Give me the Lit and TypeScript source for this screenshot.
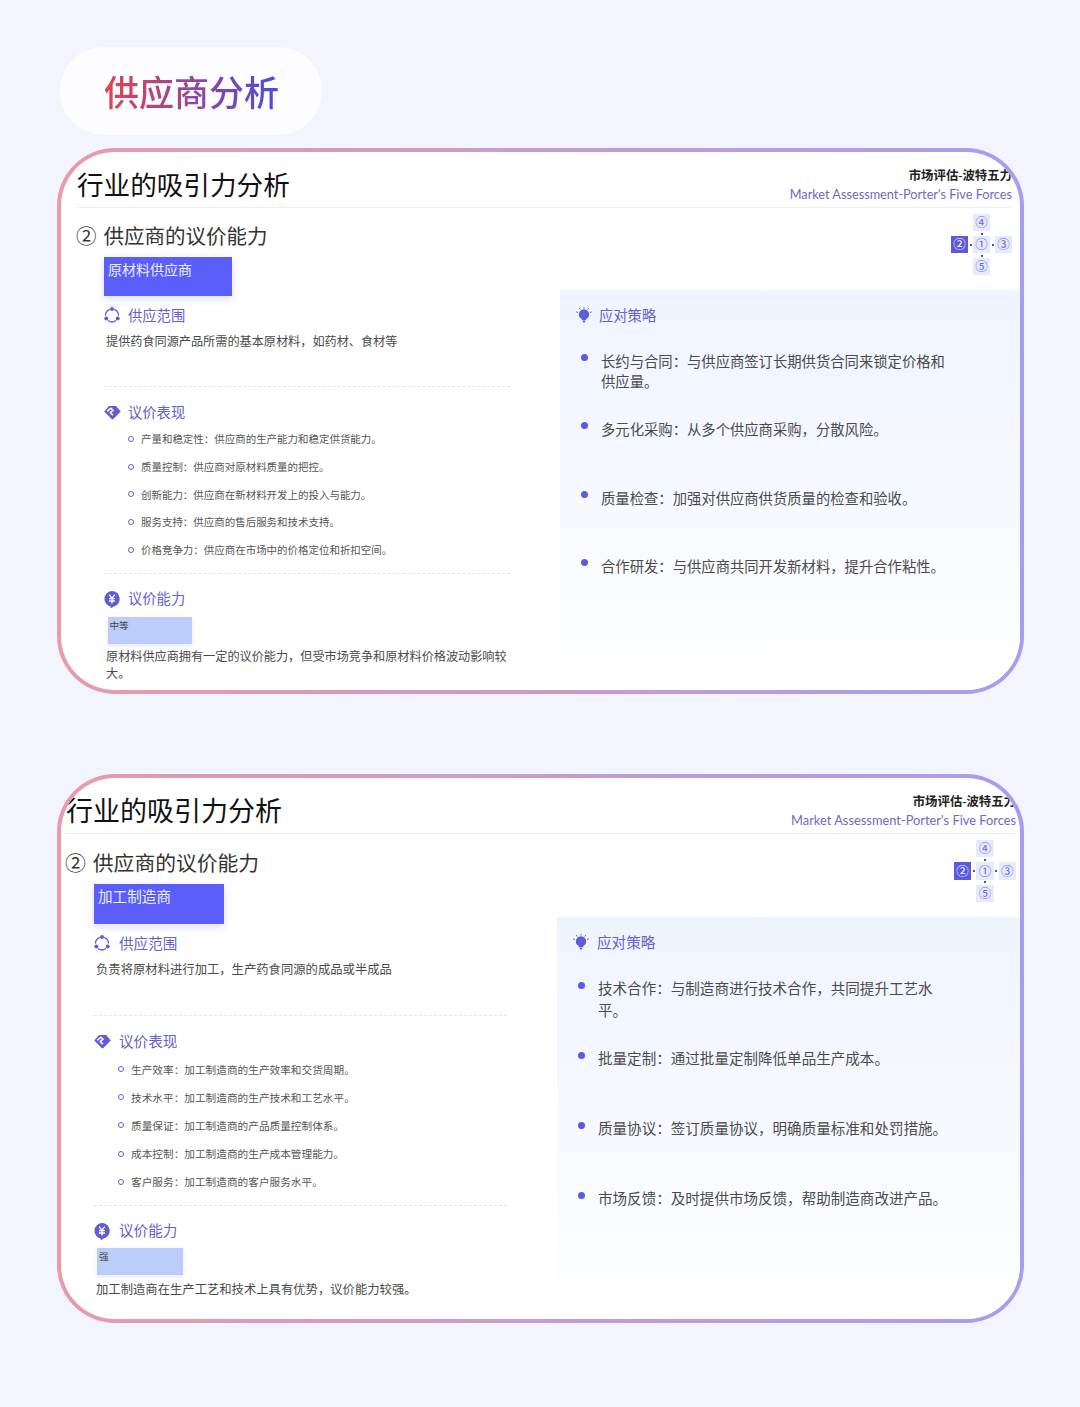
import { LitElement, html, css, svg } from "lit";
import { customElement, property } from "lit/decorators.js";

const ICON_SHARE = svg`<svg class="ic" viewBox="0 0 16 16" fill="none" stroke="#5f5cd6" stroke-width="1.3" stroke-linecap="round">
  <path d="M10.6 2.6A6.5 6.5 0 0 1 14.5 8.2"/><path d="M5.4 2.6A6.5 6.5 0 0 0 1.5 8.2"/><path d="M4.4 13.8A6.5 6.5 0 0 0 11.6 13.8"/>
  <g fill="#5f5cd6" stroke="none"><circle cx="8" cy="2.1" r="2"/><circle cx="2.3" cy="11.6" r="2"/><circle cx="13.7" cy="11.6" r="2"/></g></svg>`;
const ICON_DEAL = svg`<svg class="ic wide" viewBox="0 0 18 16">
  <path d="M5.2 1h7.6L17.8 6.8 9.9 14.8a1.3 1.3 0 0 1-1.8 0L.2 6.8z" fill="#5f5cd6"/>
  <path d="M3.4 6.8 7 3.4l2.6 2.2-3 2.6 2.8 2.6" fill="none" stroke="#fff" stroke-width="1.6" stroke-linejoin="round"/></svg>`;
const ICON_YEN = svg`<svg class="ic" viewBox="0 0 16 16">
  <path d="M8 0a7.9 7.9 0 0 1 1.6 15.6L7.4 17a.5.5 0 0 1-.8-.4v-1A7.9 7.9 0 0 1 8 0z" fill="#5f5cd6"/>
  <path d="M5.2 3.7 8 7.2l2.8-3.5M5 7.6h6M5 10h6M8 7.2v5.2" fill="none" stroke="#fff" stroke-width="1.3"/></svg>`;
const ICON_BULB = svg`<svg class="ic" viewBox="0 0 16 16">
  <circle cx="8" cy="7.4" r="5.2" fill="#5f5cd6"/><path d="M5.8 11.4h4.4v1.8H5.8zM6.6 13.8h2.8l-.6 1.6H7.2z" fill="#5f5cd6"/>
  <path d="M8 .3v.9M3.4 1.4l.6.8M12.6 1.4l-.6.8M.6 5l1 .4M15.4 5l-1 .4" stroke="#5f5cd6" stroke-width="1" stroke-linecap="round"/></svg>`;

interface Slide {
  variant: string;
  supplier: string;
  scope: string;
  rows: string[];
  level: string;
  power: string;
  strategies: string[];
}

const SLIDES: Slide[] = [
  {
    variant: "one",
    supplier: "原材料供应商",
    scope: "提供药食同源产品所需的基本原材料\uFF0C如药材、食材等",
    rows: [
      "产量和稳定性\uFF1A供应商的生产能力和稳定供货能力。",
      "质量控制\uFF1A供应商对原材料质量的把控。",
      "创新能力\uFF1A供应商在新材料开发上的投入与能力。",
      "服务支持\uFF1A供应商的售后服务和技术支持。",
      "价格竞争力\uFF1A供应商在市场中的价格定位和折扣空间。",
    ],
    level: "中等",
    power: "原材料供应商拥有一定的议价能力\uFF0C但受市场竞争和原材料价格波动影响较大。",
    strategies: [
      "长约与合同\uFF1A与供应商签订长期供货合同来锁定价格和供应量。",
      "多元化采购\uFF1A从多个供应商采购\uFF0C分散风险。",
      "质量检查\uFF1A加强对供应商供货质量的检查和验收。",
      "合作研发\uFF1A与供应商共同开发新材料\uFF0C提升合作粘性。",
    ],
  },
  {
    variant: "two",
    supplier: "加工制造商",
    scope: "负责将原材料进行加工\uFF0C生产药食同源的成品或半成品",
    rows: [
      "生产效率\uFF1A加工制造商的生产效率和交货周期。",
      "技术水平\uFF1A加工制造商的生产技术和工艺水平。",
      "质量保证\uFF1A加工制造商的产品质量控制体系。",
      "成本控制\uFF1A加工制造商的生产成本管理能力。",
      "客户服务\uFF1A加工制造商的客户服务水平。",
    ],
    level: "强",
    power: "加工制造商在生产工艺和技术上具有优势\uFF0C议价能力较强。",
    strategies: [
      "技术合作\uFF1A与制造商进行技术合作\uFF0C共同提升工艺水平。",
      "批量定制\uFF1A通过批量定制降低单品生产成本。",
      "质量协议\uFF1A签订质量协议\uFF0C明确质量标准和处罚措施。",
      "市场反馈\uFF1A及时提供市场反馈\uFF0C帮助制造商改进产品。",
    ],
  },
];

@customElement("slide-card")
class SlideCard extends LitElement {
  @property({ attribute: false }) slide!: Slide;

  static styles = css`
    :host { display: block; }
    * { box-sizing: border-box; }
    .card {
      width: 967px;
      border: 4px solid transparent;
      border-radius: 58px;
      background: linear-gradient(#fff, #fff) padding-box,
        linear-gradient(90deg, #e99ba8 0%, #a79df0 100%) border-box;
      overflow: hidden;
      font-family: "Noto Sans CJK SC", sans-serif;
      color: #444;
    }
    .one { height: 546px;
      --pad-l: 16px; --pad-r: 8px; --title: 26.6px; --en: 12.7px; --sub-x: 15px; --sub: 20.5px; --main-x: 43px;
      --left: 499px; --sub-mt: 12px; --badge-w: 128px; --badge-h: 39px; --badge-f: 14px;
      --desc: 12.15px; --sep1: 36px; --row: 27.7px; --row-f: 10.48px; --rows-mt: 2px; --sep2: 9.4px;
      --tag-x: 3.5px; --tag-w: 84px; --tag-mt: 7px; --power-mt: 3.5px; --head-gap: 8px; --head-f: 14.3px;
      --li-f: 14.33px; --li-lh: 20px; --li-h: 68.4px; --li-dot: 3px; --panel-pt: 14px; --list-mt: 25px; --p-head-gap: 7px;
      --nav-mb: 15px; --cell: 17px; }
    .two { height: 549px;
      --pad-l: 5px; --pad-r: 4px; --title: 27px; --en: 12.85px; --sub-x: 4px; --sub: 20.8px; --main-x: 33px;
      --left: 496px; --sub-mt: 13px; --badge-w: 130px; --badge-h: 40px; --badge-f: 14.6px;
      --desc: 12.33px; --sep1: 37px; --row: 28.2px; --row-f: 10.67px; --rows-mt: 3px; --sep2: 9px;
      --tag-x: 3px; --tag-w: 86px; --tag-mt: 6px; --power-mt: 6.5px; --head-gap: 9px; --head-f: 14.6px;
      --li-f: 14.56px; --li-lh: 22px; --li-h: 69.9px; --li-dot: 5px; --panel-pt: 14px; --list-mt: 24px; --p-head-gap: 8px;
      --nav-mb: 15px; --cell: 17.4px; }

    .head {
      height: 56px;
      margin: 0 var(--pad-r) 0 var(--pad-l);
      border-bottom: 1px solid #ececf2;
      display: flex;
      justify-content: space-between;
    }
    .title { font-size: var(--title); line-height: 40px; padding-top: 12px; color: #111; white-space: nowrap; }
    .tr { padding-top: 15px; text-align: right; white-space: nowrap; }
    .cn { font-family: "Liberation Serif", "Noto Sans CJK SC", serif; font-weight: 700; font-size: 12.4px; line-height: 18px; color: #222; }
    .en { font-family: Lato, sans-serif; font-size: var(--en); line-height: 18px; color: #6d6ac8; }

    .body { display: grid; grid-template-columns: var(--left) 1fr; height: calc(100% - 56px); }
    .sub { display: flex; gap: 7px; margin: var(--sub-mt) 0 0 var(--sub-x); font-size: var(--sub); line-height: 30px; color: #333; }
    .main { padding: 7px 50px 0 var(--main-x); }
    .badge {
      width: var(--badge-w); height: var(--badge-h); padding: 2px 4px;
      background: #5b5ef9; color: #eef; font-size: var(--badge-f); line-height: 20px;
      box-shadow: 0 3px 8px rgba(91, 94, 249, 0.22);
    }
    .heading { display: flex; align-items: center; gap: var(--head-gap); height: 22px; font-size: var(--head-f); color: #6461cf; }
    .heading span { padding-bottom: 2px; }
    .ic { width: 16px; height: 16px; flex: none; overflow: visible; }
    .wide { width: 17px; height: 15px; margin-right: -1px; }
    .h1 { margin-top: 8px; }
    .desc { margin: 6px 0 0 2px; font-size: var(--desc); line-height: 18px; color: #4a4a4a; }
    .sep { border-top: 1px dashed #e6e6ea; height: 0; }
    .s1 { margin-top: var(--sep1); }
    .s2 { margin-top: var(--sep2); }
    .h2 { margin-top: 14px; }
    .rows { margin-top: var(--rows-mt); }
    .row { height: var(--row); display: flex; align-items: center; gap: 7px; padding-left: 24px; font-size: var(--row-f); color: #555; white-space: nowrap; }
    .ring { width: 6px; height: 6px; border: 1.2px solid #6461cf; border-radius: 50%; flex: none; }
    .tag {
      margin: var(--tag-mt) 0 0 var(--tag-x); width: var(--tag-w); height: 27px; padding: 0 2px;
      background: #bccdfb; font-size: 9.6px; line-height: 17px; color: #444;
      box-shadow: 0 2px 5px rgba(120, 140, 230, 0.2);
    }
    .power { margin: var(--power-mt) 0 0 2px; font-size: var(--desc); line-height: 17px; color: #4a4a4a; }

    .right { display: flex; flex-direction: column; min-width: 0; }
    .nav {
      align-self: flex-end; margin: 6px var(--pad-r) var(--nav-mb) 0;
      display: grid; grid-template-columns: var(--cell) 5px var(--cell) 5px var(--cell); grid-template-rows: var(--cell) 5px var(--cell) 5px var(--cell);
      place-items: center; font-size: 12.5px; color: #6a68d8; line-height: 1;
    }
    .cell { width: var(--cell); height: var(--cell); background: #e5eafc; display: flex; align-items: center; justify-content: center; }
    .cell.on { background: #5a5ae0; color: #fff; }
    .dot { width: 2px; height: 2px; border-radius: 50%; background: #222; }
    .panel { flex: 1; padding: var(--panel-pt) 0 0 16px; background: linear-gradient(180deg, #f0f4ff 0%, #f5f8ff 45%, #ffffff 100%); }
    .p-head { gap: var(--p-head-gap); }
    .list { list-style: none; margin: var(--list-mt) 0 0; padding: 0 0 0 25px; }
    .list li { height: var(--li-h); width: 352px; font-size: var(--li-f); line-height: var(--li-lh); color: #4a4a4a; position: relative; }
    .list li::before {
      content: ""; position: absolute; left: -20.5px; top: var(--li-dot); width: 7px; height: 7px; border-radius: 50%; background: #5a5ae8;
    }
  `;

  render() {
    const s = this.slide;
    return html`<section class="card ${s.variant}">
      <header class="head">
        <div class="title">行业的吸引力分析</div>
        <div class="tr">
          <div class="cn">市场评估-波特五力</div>
          <div class="en">Market Assessment-Porter's Five Forces</div>
        </div>
      </header>
      <div class="body">
        <div>
          <div class="sub"><span>②</span><span>供应商的议价能力</span></div>
          <div class="main">
            <div class="badge">${s.supplier}</div>
            <div class="heading h1">${ICON_SHARE}<span>供应范围</span></div>
            <p class="desc">${s.scope}</p>
            <div class="sep s1"></div>
            <div class="heading h2">${ICON_DEAL}<span>议价表现</span></div>
            <div class="rows">
              ${s.rows.map((r) => html`<div class="row"><i class="ring"></i><span>${r}</span></div>`)}
            </div>
            <div class="sep s2"></div>
            <div class="heading h2">${ICON_YEN}<span>议价能力</span></div>
            <div class="tag">${s.level}</div>
            <p class="power">${s.power}</p>
          </div>
        </div>
        <div class="right">
          <div class="nav">
            <span></span><span></span><div class="cell">④</div><span></span><span></span>
            <span></span><span></span><i class="dot"></i><span></span><span></span>
            <div class="cell on">②</div><i class="dot"></i><div class="cell">①</div><i class="dot"></i><div class="cell">③</div>
            <span></span><span></span><i class="dot"></i><span></span><span></span>
            <span></span><span></span><div class="cell">⑤</div><span></span><span></span>
          </div>
          <div class="panel">
            <div class="heading p-head">${ICON_BULB}<span>应对策略</span></div>
            <ul class="list">${s.strategies.map((t) => html`<li>${t}</li>`)}</ul>
          </div>
        </div>
      </div>
    </section>`;
  }
}

@customElement("app-root")
class AppRoot extends LitElement {
  static styles = css`
    :host { display: block; width: 1080px; height: 1407px; background: #f2f5ff; overflow: hidden; }
    * { box-sizing: border-box; }
    .page { padding: 47px 0 0 57px; }
    .pill {
      width: 262px; height: 88px; margin-left: 3px; padding-left: 44px;
      border-radius: 44px; background: #fdfdff;
      display: flex; align-items: center;
    }
    .pill span {
      font-family: "Noto Sans CJK SC", sans-serif; font-size: 35px; font-weight: 500; line-height: 1.2;
      background: linear-gradient(90deg, #e2444e 0%, #4a49e6 100%);
      -webkit-background-clip: text; background-clip: text; color: transparent;
    }
    .first { margin-top: 13px; }
    .next { margin-top: 80px; }
  `;
  render() {
    return html`<div class="page">
      <div class="pill"><span>供应商分析</span></div>
      <slide-card class="first" .slide=${SLIDES[0]}></slide-card>
      <slide-card class="next" .slide=${SLIDES[1]}></slide-card>
    </div>`;
  }
}
